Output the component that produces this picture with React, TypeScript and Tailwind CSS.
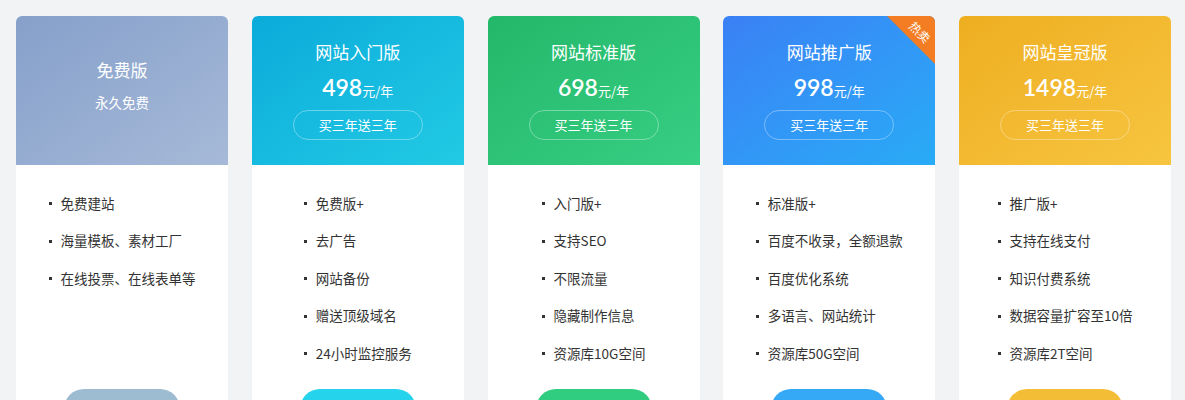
import React from 'react';

type Plan = {
  name: string;
  price?: string;
  sub?: string;
  header: string;
  button: string;
  hot?: boolean;
  features: string[];
};

const plans: Plan[] = [
  {
    name: '免费版',
    sub: '永久免费',
    header: 'bg-linear-to-br from-[#86a0ca] to-[#a6b9d8]',
    button: 'bg-[#9dbbd1]',
    features: ['免费建站', '海量模板、素材工厂', '在线投票、在线表单等'],
  },
  {
    name: '网站入门版',
    price: '498',
    header: 'bg-linear-to-br from-[#0aabda] to-[#22cae4]',
    button: 'bg-[#25d3ec]',
    features: ['免费版+', '去广告', '网站备份', '赠送顶级域名', '24小时监控服务'],
  },
  {
    name: '网站标准版',
    price: '698',
    header: 'bg-linear-to-br from-[#23b769] to-[#37cf84]',
    button: 'bg-[#30cc80]',
    features: ['入门版+', '支持SEO', '不限流量', '隐藏制作信息', '资源库10G空间'],
  },
  {
    name: '网站推广版',
    price: '998',
    hot: true,
    header: 'bg-linear-to-br from-[#3a80f5] to-[#28abf6]',
    button: 'bg-[#36a9f6]',
    features: ['标准版+', '百度不收录，全额退款', '百度优化系统', '多语言、网站统计', '资源库50G空间'],
  },
  {
    name: '网站皇冠版',
    price: '1498',
    header: 'bg-linear-to-br from-[#eeae20] to-[#f7c53f]',
    button: 'bg-[#f3bd36]',
    features: ['推广版+', '支持在线支付', '知识付费系统', '数据容量扩容至10倍', '资源库2T空间'],
  },
];

function PlanCard({ plan }: { plan: Plan }) {
  return (
    <div className="relative overflow-hidden rounded-t-[6px] bg-white">
      {/* Header */}
      <div className={`flex h-[149px] flex-col items-center text-white ${plan.header} ${plan.price ? 'pt-[24px]' : 'pt-[42px]'}`}>
        <div className="text-[17px] leading-[24px]">{plan.name}</div>
        {plan.sub && <div className="mt-[10px] text-[13.5px] leading-[20px]">{plan.sub}</div>}
        {plan.price && (
          <>
            <div className="mt-[8px] flex items-baseline leading-[30px]">
              <span className="font-['Lato','Noto_Sans',sans-serif] text-[23px] font-semibold">{plan.price}</span>
              <span className="text-[13px]">元/年</span>
            </div>
            <div className="mt-[4px] flex h-[30px] w-[130px] items-center justify-center rounded-full border border-white/35 text-[13px]">
              买三年送三年
            </div>
          </>
        )}
      </div>

      {/* Hot badge */}
      {plan.hot && (
        <div className="absolute top-0 right-0 h-[48px] w-[48px]">
          <svg width="48" height="48" viewBox="0 0 48 48" className="absolute inset-0">
            <polygon points="0,0 48,0 48,48" fill="#f47c22" />
          </svg>
          <span className="absolute top-[10px] right-[3px] rotate-45 text-[12px] leading-none text-white">热卖</span>
        </div>
      )}

      {/* Features */}
      <div className="flex flex-col items-center pt-[19px]">
        <ul className="text-[13.5px] text-[#333]">
          {plan.features.map((f) => (
            <li key={f} className="flex h-[37.5px] items-center whitespace-nowrap">
              <span className="mt-[2px] mr-[9px] h-[3px] w-[3px] bg-[#333]" />
              {f}
            </li>
          ))}
        </ul>
      </div>

      <div className={`absolute top-[373px] left-1/2 h-[40px] w-[116px] -translate-x-1/2 rounded-[20px] ${plan.button}`} />
    </div>
  );
}

export default function App() {
  return (
    <div className="h-[400px] overflow-hidden bg-[#f2f3f5] pt-4 pl-4 font-['Noto_Sans_CJK_SC','Noto_Sans',sans-serif]">
      <div className="grid h-[500px] w-[1155px] grid-cols-5 gap-x-[23.75px]">
        {plans.map((p) => (
          <PlanCard key={p.name} plan={p} />
        ))}
      </div>
    </div>
  );
}
